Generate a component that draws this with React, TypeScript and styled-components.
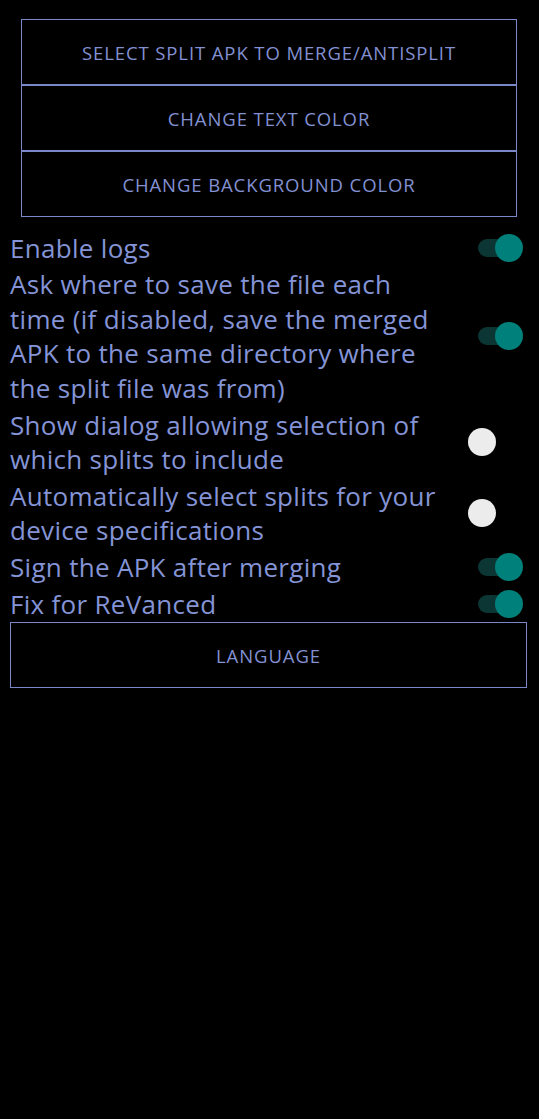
import React from "react";
import styled, { createGlobalStyle } from "styled-components";

const Global = createGlobalStyle`
  html, body { margin: 0; padding: 0; background: #000; }
  body { font-family: "Open Sans", "Noto Sans", sans-serif; }
  #root { min-height: 1119px; background: #000; }
`;

const Page = styled.div`
  display: flex;
  flex-direction: column;
  padding-top: 19px;
  background: #000;
  min-height: 1119px;
  box-sizing: border-box;
`;

const ButtonStack = styled.div`
  display: flex;
  flex-direction: column;
  margin: 0 22px 0 21px;
`;

const OutlineButton = styled.button`
  display: flex;
  align-items: center;
  justify-content: center;
  height: 66px;
  box-sizing: border-box;
  border: 1px solid #7b88c8;
  background: #000;
  color: #8291d2;
  font-family: "Open Sans", "Noto Sans", sans-serif;
  font-size: 18.5px;
  letter-spacing: 0.9px;
  text-transform: uppercase;
  padding: 0;
  margin: 0;
  cursor: pointer;
`;

const Settings = styled.div`
  display: flex;
  flex-direction: column;
  gap: 2.3px;
  padding-top: 13.5px;
`;

const Row = styled.div`
  display: flex;
  align-items: center;
  padding-left: 10px;
  padding-right: 16px;
`;

const Label = styled.div`
  flex: 1;
  max-width: 438px;
  color: #8494d6;
  font-size: 26px;
  letter-spacing: 0.3px;
  line-height: 34.5px;
`;

const SwitchBox = styled.div`
  position: relative;
  width: 56px;
  height: 28px;
  margin-left: auto;
  flex-shrink: 0;
`;

const Track = styled.div<{ $on: boolean }>`
  position: absolute;
  left: 11px;
  right: 1px;
  top: 5px;
  height: 18px;
  border-radius: 9px;
  background: ${(p) => (p.$on ? "#0b3634" : "transparent")};
`;

const Thumb = styled.div<{ $on: boolean }>`
  position: absolute;
  top: 0;
  left: ${(p) => (p.$on ? "28px" : "1px")};
  width: 28px;
  height: 28px;
  border-radius: 50%;
  background: ${(p) => (p.$on ? "#00807a" : "#ececec")};
`;

const BottomButton = styled(OutlineButton)`
  margin: 1px 12px 0 10px;
`;

function Toggle({ on }: { on: boolean }) {
  return (
    <SwitchBox>
      <Track $on={on} />
      <Thumb $on={on} />
    </SwitchBox>
  );
}

const items = [
  { label: "Enable logs", on: true },
  {
    label:
      "Ask where to save the file each time (if disabled, save the merged APK to the same directory where the split file was from)",
    on: true,
  },
  { label: "Show dialog allowing selection of which splits to include", on: false },
  { label: "Automatically select splits for your device specifications", on: false },
  { label: "Sign the APK after merging", on: true },
  { label: "Fix for ReVanced", on: true },
];

export default function App() {
  return (
    <>
      <Global />
      <Page>
        <ButtonStack>
          <OutlineButton>Select split APK to merge/antisplit</OutlineButton>
          <OutlineButton>Change text color</OutlineButton>
          <OutlineButton>Change background color</OutlineButton>
        </ButtonStack>
        <Settings>
          {items.map((it) => (
            <Row key={it.label}>
              <Label>{it.label}</Label>
              <Toggle on={it.on} />
            </Row>
          ))}
        </Settings>
        <BottomButton>Language</BottomButton>
      </Page>
    </>
  );
}
